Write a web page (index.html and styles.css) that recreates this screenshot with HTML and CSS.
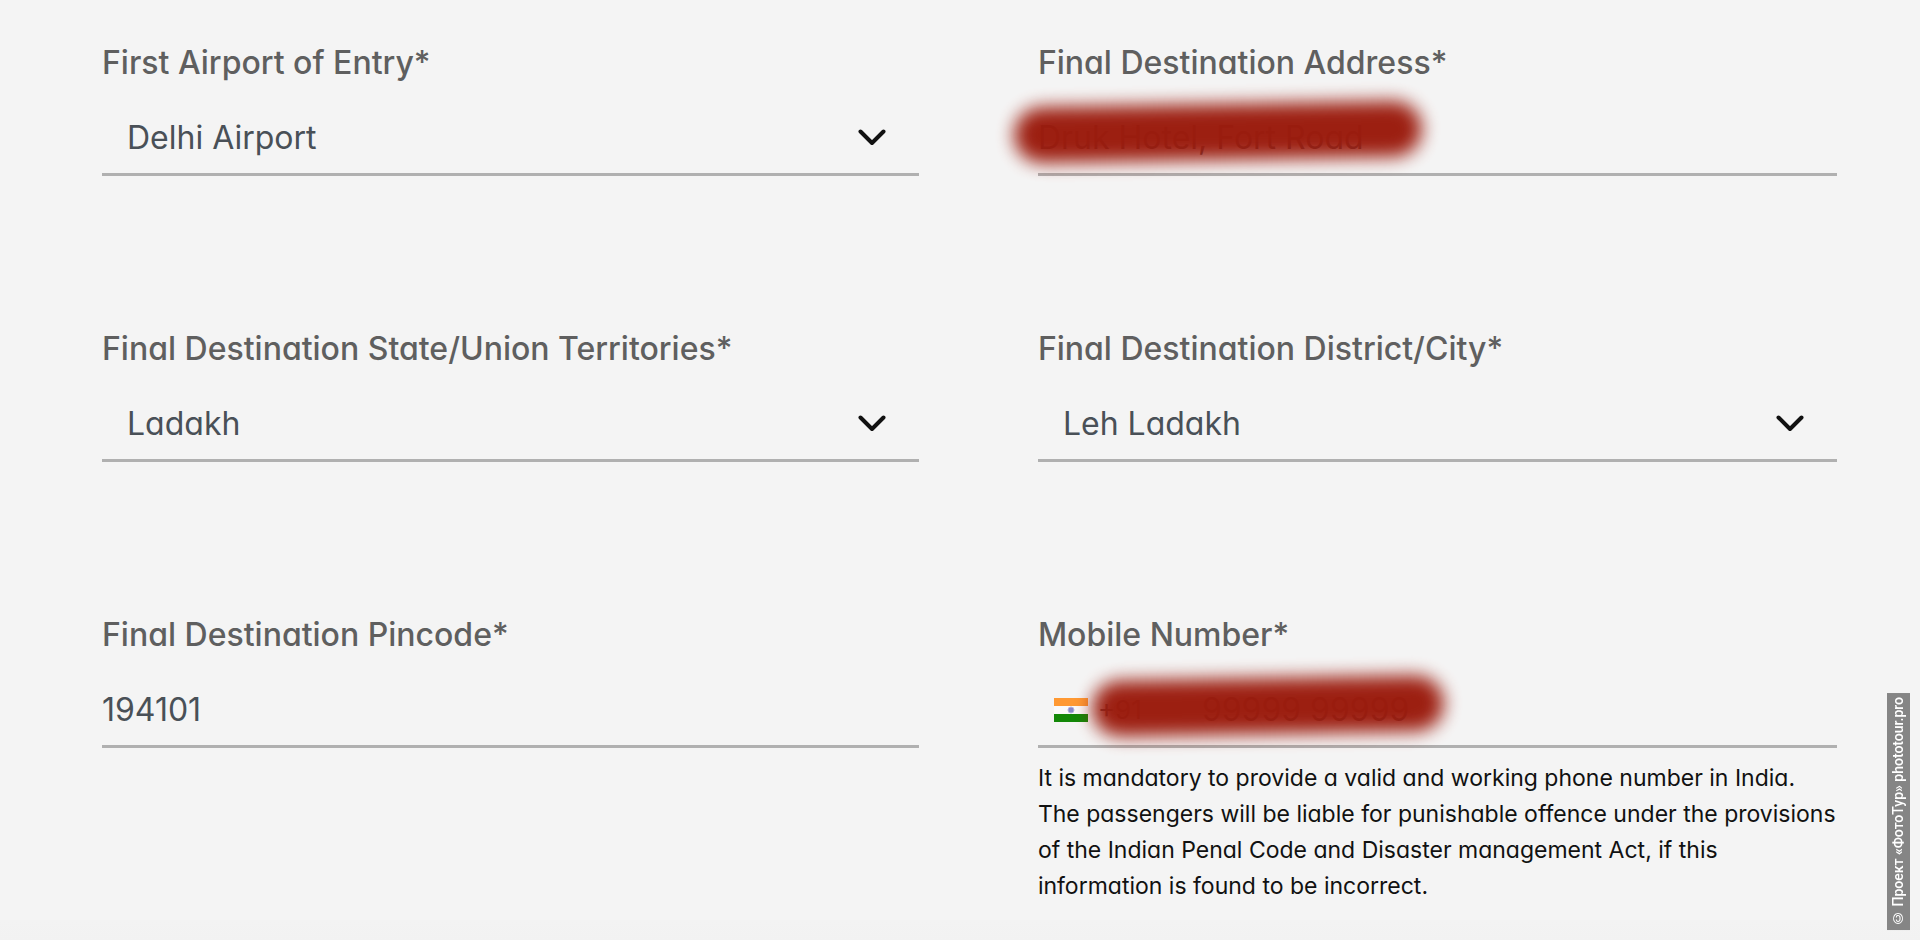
FILE: index.html
```html
<!DOCTYPE html>
<html lang="en">
<head>
  <meta charset="UTF-8">
  <meta name="viewport" content="width=device-width, initial-scale=1.0">
  <title>Destination details</title>
  <link rel="stylesheet" href="styles.css">
</head>
<body>
  <form class="details-form">
    <div class="field">
      <label for="airport">First Airport of Entry*</label>
      <div class="control">
        <select id="airport" name="airport">
          <option>Delhi Airport</option>
        </select>
        <svg class="chevron" viewBox="0 0 28 18" aria-hidden="true"><path d="M2.5 2.5 14 14 25.500 2.5"/></svg>
      </div>
    </div>
    <div class="field">
      <label for="address">Final Destination Address*</label>
      <div class="control">
        <input id="address" name="address" type="text" value="Druk Hotel, Fort Road">
        <span class="smear smear-address"></span>
      </div>
    </div>
    <div class="field">
      <label for="state">Final Destination State/Union Territories*</label>
      <div class="control">
        <select id="state" name="state">
          <option>Ladakh</option>
        </select>
        <svg class="chevron" viewBox="0 0 28 18" aria-hidden="true"><path d="M2.5 2.5 14 14 25.500 2.5"/></svg>
      </div>
    </div>
    <div class="field">
      <label for="city">Final Destination District/City*</label>
      <div class="control">
        <select id="city" name="city">
          <option>Leh Ladakh</option>
        </select>
        <svg class="chevron" viewBox="0 0 28 18" aria-hidden="true"><path d="M2.5 2.5 14 14 25.500 2.5"/></svg>
      </div>
    </div>
    <div class="field">
      <label for="pincode">Final Destination Pincode*</label>
      <div class="control">
        <input id="pincode" name="pincode" type="text" value="194101">
      </div>
    </div>
    <div class="field">
      <label for="mobile">Mobile Number*</label>
      <div class="control phone">
        <svg class="flag" viewBox="0 0 34 24" role="img" aria-label="India">
          <path fill="#f93" d="M0 0h34v8H0z"/>
          <path fill="#fafafa" d="M0 8h34v8H0z"/>
          <path fill="#138808" d="M0 16h34v8H0z"/>
          <circle cx="17" cy="12" r="3" fill="#8888c8" stroke="#b4b4de"/>
        </svg>
        <span class="dial-code">+91</span>
        <input id="mobile" name="mobile" type="tel" value="99999 99999">
        <span class="smear smear-mobile"></span>
      </div>
      <p class="hint">It is mandatory to provide a valid and working phone number in India. The passengers will be liable for punishable offence under the provisions of the Indian Penal Code and Disaster management Act, if this information is found to be incorrect.</p>
    </div>
  </form>
  <div class="copyright">© Проект «ФотоТур» phototour.pro</div>
</body>
</html>
```
FILE: styles.css
```css
*{
  padding: 0;
  margin: 0;
  box-sizing: border-box;
}
body{
  min-height: 100vh;
  font-family: Inter, "Liberation Sans", sans-serif;
  font-feature-settings: "cv11";
  background: linear-gradient(#f3f3f3, #f2f2f2) bottom / 100% 20px no-repeat #f4f4f4;
}
.details-form{
  display: grid;
  grid-template-columns: 46fr 45fr;
  column-gap: 119px;
  row-gap: 153px;
  padding: 43px 83px 24px 102px;
}
.field{
  min-width: 0;
}
label{
  display: block;
  margin-bottom: 19px;
  font-size: 32px;
  font-weight: 500;
  line-height: 40px;
  color: #5f5f5f;
}
.control{
  position: relative;
  display: flex;
  align-items: center;
  height: 74px;
  border-bottom: 3px solid #b0b0b0;
}
select,
input,
.dial-code{
  font: inherit;
  font-size: 32px;
  color: #495057;
}
select,
input{
  flex: 1;
  min-width: 0;
  height: 100%;
  border: none;
  outline: none;
  background: transparent;
  appearance: none;
}
select{
  padding: 0 64px 0 25px;
}
.chevron{
  position: absolute;
  right: 33px;
  width: 28px;
  height: 18px;
  fill: none;
  stroke: #111;
  stroke-width: 4;
  stroke-linecap: round;
  stroke-linejoin: round;
  pointer-events: none;
}
.phone{
  padding-left: 16px;
}
.flag{
  width: 34px;
  height: 24px;
  margin-right: 10px;
}
.dial-code{
  width: 104px;
  font-size: 26px;
}
/* painted over the private values */
.smear{
  position: absolute;
  height: 56px;
  border-radius: 28px;
  background: #9b1b0d;
  opacity: .98;
  filter: blur(9px);
  transform: rotate(-1deg);
  pointer-events: none;
}
.smear-address{
  left: -24px;
  top: 2px;
  width: 408px;
}
.smear-mobile{
  left: 54px;
  top: 4px;
  width: 352px;
}
.hint{
  margin-top: 12px;
  font-size: 23px;
  line-height: 36px;
  color: #111;
}
.copyright{
  position: fixed;
  right: 10px;
  bottom: 10px;
  padding: 4px 0;
  writing-mode: vertical-rl;
  transform: rotate(180deg);
  font-family: Roboto, "Liberation Sans", sans-serif;
  font-size: 14px;
  font-weight: 500;
  line-height: 23px;
  color: #fff;
  background: #858585;
}
```
